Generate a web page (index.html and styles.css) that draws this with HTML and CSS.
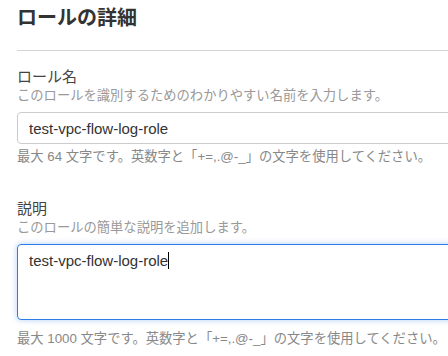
FILE: index.html
```html
<!DOCTYPE html>
<html lang="ja">
<head>
    <meta charset="UTF-8">
    <meta name="viewport" content="width=device-width, initial-scale=1.0">
    <title>ロールの詳細</title>
    <link rel="stylesheet" href="styles.css">
</head>
<body>
    <div class="panel">
        <div class="panel-header">
            <h2>ロールの詳細</h2>
        </div>

        <div class="field">
            <label class="field-label" for="roleName">ロール名</label>
            <div class="field-desc">このロールを識別するためのわかりやすい名前を入力します。</div>
            <input id="roleName" class="text-input" type="text" value="test-vpc-flow-log-role">
            <div class="field-hint">最大 64 文字です。英数字と「+=,.@-_」の文字を使用してください。</div>
        </div>

        <div class="field">
            <label class="field-label">説明</label>
            <div class="field-desc">このロールの簡単な説明を追加します。</div>
            <div class="text-area is-focused">test-vpc-flow-log-role<span class="caret"></span></div>
            <div class="field-hint hint-area">最大 1000 文字です。英数字と「+=,.@-_」の文字を使用してください。</div>
        </div>
    </div>
</body>
</html>
```

FILE: styles.css
```css
html, body {
    margin: 0;
    padding: 0;
    background: #fff;
    overflow: hidden;
}

body {
    font-family: 'Liberation Sans', Arial, 'Noto Sans CJK JP', sans-serif;
    color: #333;
}

.panel {
    width: 480px;
    padding: 6px 0 0 17px;
}

.panel-header {
    border-bottom: 1px solid #d5d5d5;
    padding-bottom: 20px;
}

.panel-header h2 {
    margin: 0;
    font-size: 20px;
    line-height: 24px;
    font-weight: 700;
    color: #333;
}

.field {
    padding-top: 16px;
}

.field + .field {
    padding-top: 33px;
}

.field-label {
    display: block;
    font-size: 15px;
    line-height: 20px;
    color: #444;
}

.field-desc {
    font-size: 13.3px;
    line-height: 18px;
    color: #999;
}

.text-input {
    display: block;
    box-sizing: border-box;
    width: 100%;
    height: 32px;
    margin-top: 7px;
    padding: 0 11px;
    border: 1px solid #ccc;
    border-radius: 4px;
    font-family: inherit;
    font-size: 15px;
    color: #333;
    outline: none;
}

.text-area {
    box-sizing: border-box;
    width: 100%;
    height: 76px;
    margin-top: 7px;
    padding: 6px 11px;
    border: 1px solid #2b7ce9;
    border-radius: 4px;
    font-size: 15px;
    line-height: 20px;
    color: #333;
}

.text-area.is-focused {
    box-shadow: 0 0 6px rgba(43, 124, 233, 0.35);
}

.caret {
    display: inline-block;
    width: 1px;
    height: 17px;
    background: #000;
    vertical-align: -3px;
}

.field-hint {
    margin-top: 4px;
    font-size: 13.3px;
    line-height: 18px;
    color: #888;
}

.hint-area {
    margin-top: 10px;
}
```
